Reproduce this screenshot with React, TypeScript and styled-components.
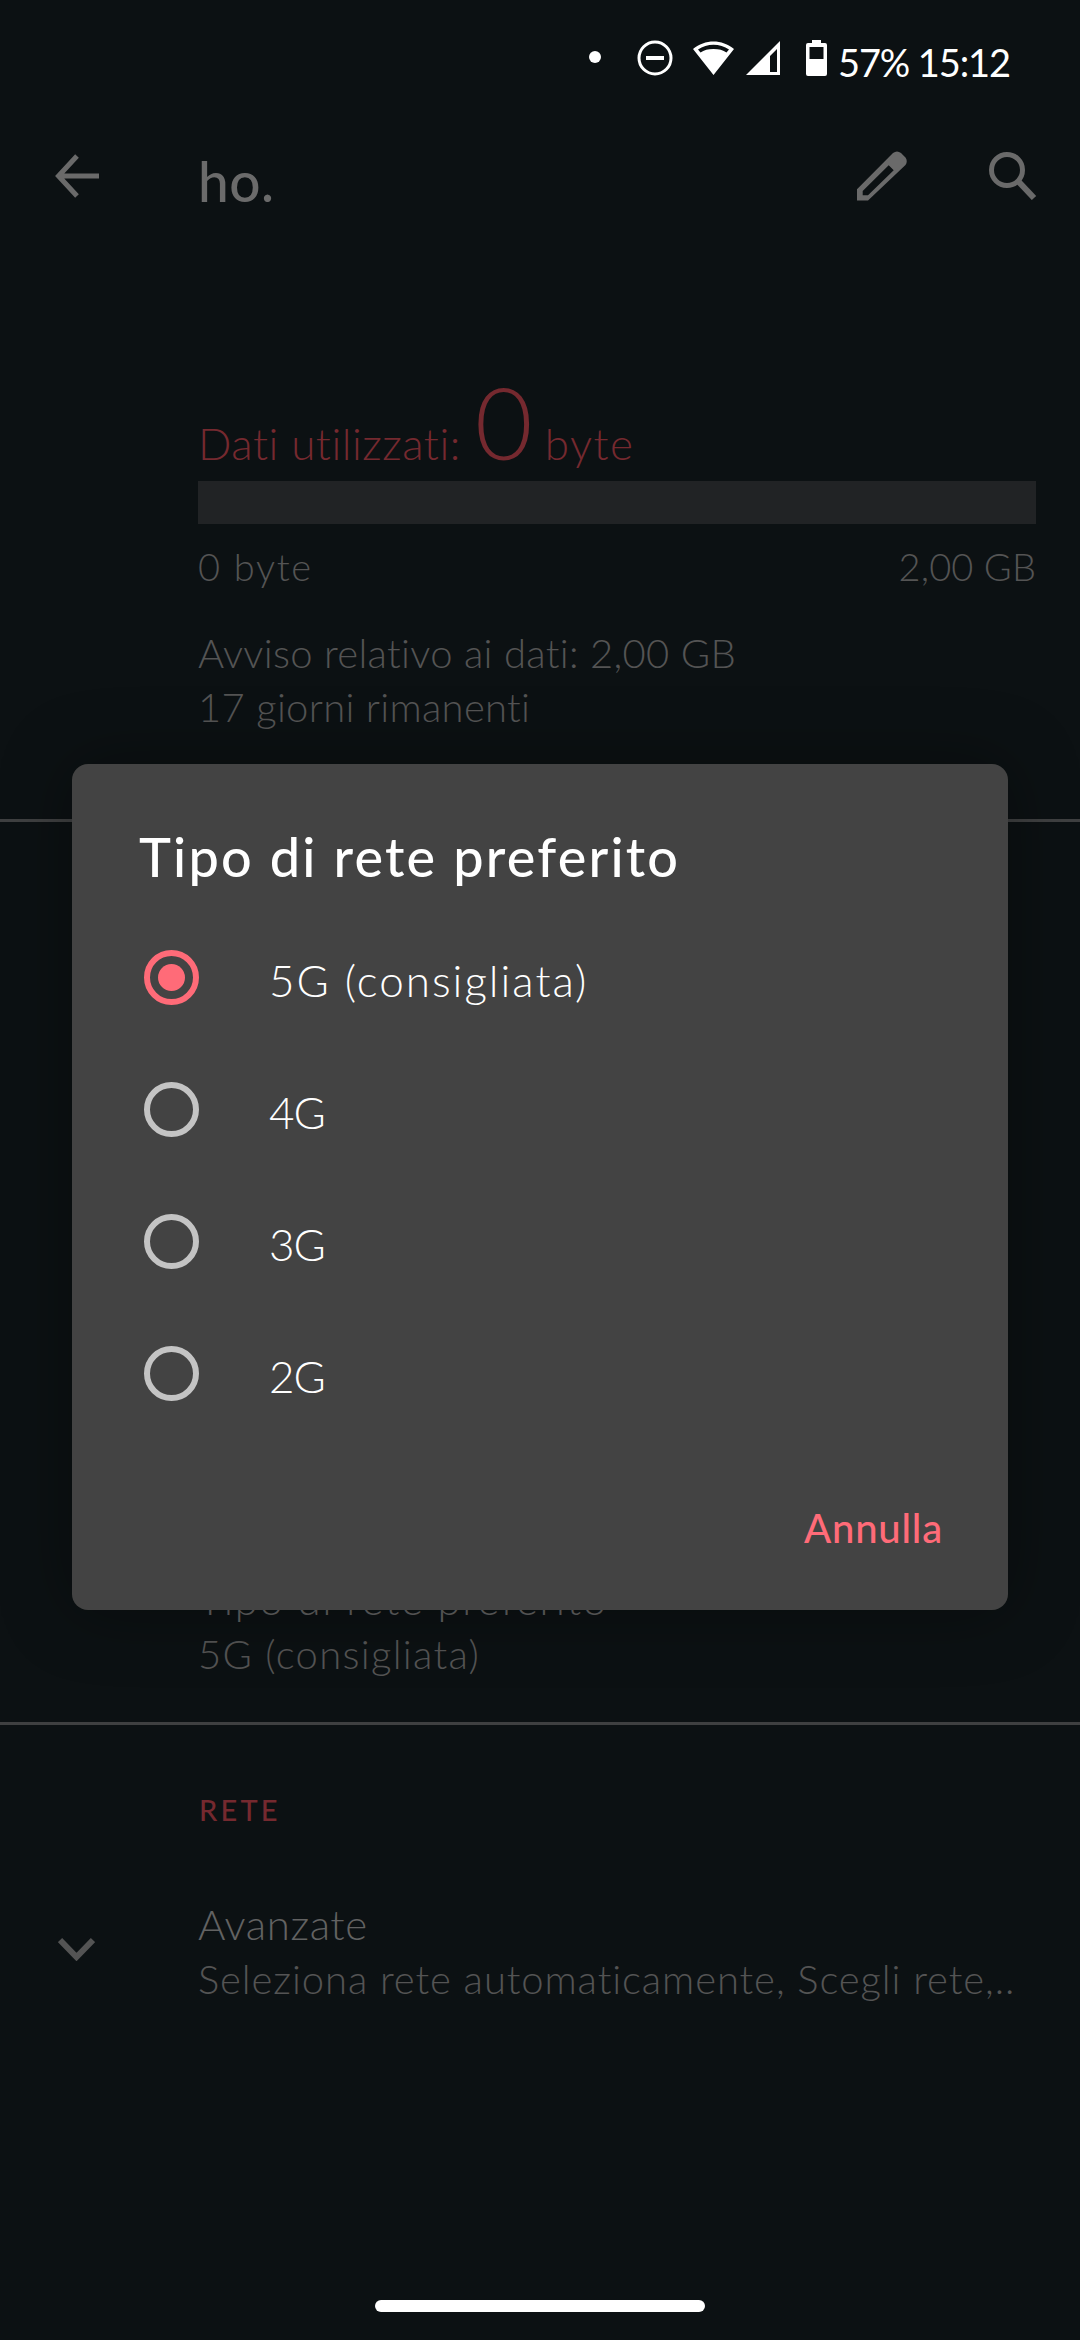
import React from 'react'
import styled, { createGlobalStyle } from 'styled-components'

const GlobalStyle = createGlobalStyle`
    html, body {
        margin: 0;
        padding: 0;
        background: #0c1113;
    }
    * {
        box-sizing: border-box;
    }
`

const font = `Lato, "Noto Sans", sans-serif`

const Screen = styled.div`
    position: relative;
    width: 1080px;
    height: 2340px;
    overflow: hidden;
    display: flex;
    flex-direction: column;
    background: #0c1113;
    font-family: ${font};
`

const StatusBar = styled.div`
    height: 112px;
    display: flex;
    align-items: flex-start;
    justify-content: flex-end;
    padding: 40px 70px 0 0;
    color: #fff;
`

const StatusDot = styled.div`
    width: 12px;
    height: 12px;
    margin: 11px 36px 0 0;
    border-radius: 50%;
    background: #fff;
`

const StatusIcon = styled.svg<{ $gap: number }>`
    display: block;
    margin-right: ${p => p.$gap}px;
`

const StatusText = styled.div`
    font-size: 38px;
    line-height: 38px;
    margin-top: 3px;
    font-weight: 400;
    letter-spacing: -1.1px;
    white-space: nowrap;
`

const Toolbar = styled.div`
    height: 128px;
    display: flex;
    align-items: center;
    padding: 0 43px 0 55px;
    color: #6a6a6a;
`

const ToolbarTitle = styled.div`
    flex: 1;
    margin: 10px 0 0 99px;
    font-size: 55px;
    font-weight: 500;
    line-height: 90px;
    letter-spacing: 0.5px;
    color: #6b6b6b;
`

const ToolbarIcon = styled.svg<{ $gap?: number }>`
    display: block;
    margin-left: ${p => p.$gap ?? 0}px;
`

const Usage = styled.section`
    padding: 137px 44px 0 198px;
    height: 579px;
`

const UsageHead = styled.div`
    display: flex;
    align-items: baseline;
    height: 104px;
    color: #75292f;
    font-size: 44px;
    font-weight: 300;
    line-height: 88px;
    letter-spacing: 0.5px;
`

const UsageBig = styled.span`
    font-size: 100px;
    letter-spacing: 0;
    margin: 0 12px 0 14px;
`

const UsageUnit = styled.span`
    letter-spacing: 1.5px;
`

const Bar = styled.div`
    height: 43px;
    background: #212325;
`

const BarLabels = styled.div`
    display: flex;
    justify-content: space-between;
    margin-top: 19px;
    font-size: 38px;
    line-height: 46px;
    font-weight: 300;
    color: #545454;
`

const BarLabel = styled.span<{ $spacing: number }>`
    letter-spacing: ${p => p.$spacing}px;
`

const UsageNote = styled.div`
    margin-top: 37px;
    font-size: 40px;
    line-height: 54px;
    font-weight: 300;
    letter-spacing: 0.3px;
    color: #545454;
`

const Divider = styled.div`
    height: 3px;
    background: #3f4041;
`

const Spacer = styled.div<{ $height: number }>`
    height: ${p => p.$height}px;
`

const Pref = styled.div`
    padding-left: 198px;
    font-weight: 300;
`

const PrefTitle = styled.div<{ $spacing: number }>`
    font-size: 42px;
    line-height: 55px;
    letter-spacing: ${p => p.$spacing}px;
    color: #626262;
`

const PrefValue = styled.div<{ $spacing: number }>`
    font-size: 40px;
    line-height: 54px;
    letter-spacing: ${p => p.$spacing}px;
    color: #545454;
`

const SectionLabel = styled.div`
    padding: 68px 0 0 199px;
    font-size: 29px;
    line-height: 34px;
    font-weight: 500;
    letter-spacing: 3.2px;
    color: #75292f;
`

const Advanced = styled.div`
    display: flex;
    align-items: center;
    margin-top: 70px;
    padding-left: 58px;
`

const Chevron = styled.svg`
    display: block;
    margin-bottom: 6px;
`

const AdvancedText = styled.div`
    margin-left: 103px;
    font-weight: 300;
    white-space: nowrap;
`

const HomeBar = styled.div`
    position: absolute;
    left: 375px;
    top: 2300px;
    width: 330px;
    height: 12px;
    border-radius: 6px;
    background: #fff;
`

const Scrim = styled.div`
    position: absolute;
    inset: 0;
    padding: 764px 72px 0;
`

const Dialog = styled.div`
    height: 846px;
    display: flex;
    flex-direction: column;
    border-radius: 16px;
    background: #434343;
    box-shadow: 0 0 70px rgba(0, 0, 0, 0.35);
    color: #fff;
`

const DialogTitle = styled.div`
    padding: 57px 0 0 67px;
    font-size: 54px;
    line-height: 72px;
    font-weight: 500;
    letter-spacing: 2.2px;
`

const Options = styled.div`
    display: flex;
    flex-direction: column;
    margin-top: 18px;
`

const Option = styled.label`
    height: 132px;
    display: flex;
    align-items: center;
    padding-left: 72px;
`

const Radio = styled.span<{ $checked?: boolean }>`
    width: 55px;
    height: 55px;
    display: flex;
    align-items: center;
    justify-content: center;
    border-radius: 50%;
    border: 6px solid ${p => (p.$checked ? '#ff6b78' : '#c4c4c4')};

    &::after {
        content: '';
        width: 27px;
        height: 27px;
        border-radius: 50%;
        background: ${p => (p.$checked ? '#ff6b78' : 'transparent')};
    }
`

const OptionLabel = styled.span<{ $spacing: number }>`
    margin-left: 70px;
    font-size: 44px;
    font-weight: 300;
    line-height: 60px;
    letter-spacing: ${p => p.$spacing}px;
    position: relative;
    top: 3px;
`

const DialogActions = styled.div`
    display: flex;
    justify-content: flex-end;
    padding: 59px 65px 0 0;
`

const CancelButton = styled.div`
    font-size: 40px;
    line-height: 60px;
    font-weight: 500;
    letter-spacing: 0.8px;
    color: #ff6b78;
`

const options = ['5G (consigliata)', '4G', '3G', '2G']

const App = () => {
    return (
        <Screen>
            <GlobalStyle />
            <StatusBar>
                <StatusDot />
                <StatusIcon $gap={20} width="36" height="36" viewBox="0 0 36 36">
                    <circle cx="18" cy="18" r="16" fill="none" stroke="#fff" strokeWidth="3" />
                    <rect x="9" y="16" width="18" height="4" fill="#fff" />
                </StatusIcon>
                <StatusIcon $gap={12} width="41" height="36" viewBox="0 0 41 36">
                    <path d="M20.5 35 L0 9 C12 -1 29 -1 41 9 Z M20.5 9 C15 9 11 10 7.5 12.5 L5 9.5 C14 3 27 3 36 9.5 L33.5 12.5 C30 10 26 9 20.5 9 Z" fill="#fff" fillRule="evenodd" />
                </StatusIcon>
                <StatusIcon $gap={26} width="34" height="36" viewBox="0 0 34 36">
                    <path d="M0 35 L34 1 V35 Z M24 32 H31 V9 L24 16 Z" fill="#fff" fillRule="evenodd" />
                </StatusIcon>
                <StatusIcon $gap={11} width="21" height="36" viewBox="0 0 21 36">
                    <path d="M6 0 H15 V3 H19 Q21 3 21 5 V34 Q21 36 19 36 H2 Q0 36 0 34 V5 Q0 3 2 3 H6 Z M3.5 7 V19 H17.5 V7 Z" fill="#fff" fillRule="evenodd" />
                </StatusIcon>
                <StatusText>57% 15:12</StatusText>
            </StatusBar>
            <Toolbar>
                <ToolbarIcon width="44" height="44" viewBox="0 0 44 44">
                    <path d="M22 2 L3.5 22 L22 42 M3.5 22 H44" fill="none" stroke="#6a6a6a" strokeWidth="5" />
                </ToolbarIcon>
                <ToolbarTitle>ho.</ToolbarTitle>
                <ToolbarIcon width="50" height="50" viewBox="0 0 50 50">
                    <path d="M0 38.3 L36 2 Q40 -1 44 2 L48.5 6.5 Q51 10 48.5 14 L11 49.5 H0 Z M5.7 40 V44.3 H11 L36.7 19.3 L31.7 14.3 Z" fill="#6a6a6a" fillRule="evenodd" />
                </ToolbarIcon>
                <ToolbarIcon $gap={82} width="48" height="48" viewBox="0 0 48 48">
                    <circle cx="18" cy="18" r="15.5" fill="none" stroke="#6a6a6a" strokeWidth="5" />
                    <path d="M29 29 L45 46" fill="none" stroke="#6a6a6a" strokeWidth="6" />
                </ToolbarIcon>
            </Toolbar>
            <Usage>
                <UsageHead>
                    Dati utilizzati:<UsageBig>0</UsageBig>
                    <UsageUnit>byte</UsageUnit>
                </UsageHead>
                <Bar />
                <BarLabels>
                    <BarLabel $spacing={1.7}>0 byte</BarLabel>
                    <BarLabel $spacing={0.1}>2,00 GB</BarLabel>
                </BarLabels>
                <UsageNote>
                    Avviso relativo ai dati: 2,00 GB
                    <br />
                    17 giorni rimanenti
                </UsageNote>
            </Usage>
            <Divider />
            <Spacer $height={750} />
            <Pref>
                <PrefTitle $spacing={1.6}>Tipo di rete preferito</PrefTitle>
                <PrefValue $spacing={1.3}>5G (consigliata)</PrefValue>
            </Pref>
            <Spacer $height={41} />
            <Divider />
            <SectionLabel>RETE</SectionLabel>
            <Advanced>
                <Chevron width="37" height="24" viewBox="0 0 37 24">
                    <path d="M2 3 L18.5 20 L35 3" fill="none" stroke="#545454" strokeWidth="6" />
                </Chevron>
                <AdvancedText>
                    <PrefTitle $spacing={0.6}>Avanzate</PrefTitle>
                    <PrefValue $spacing={0.9}>Seleziona rete automaticamente, Scegli rete,..</PrefValue>
                </AdvancedText>
            </Advanced>
            <HomeBar />
            <Scrim>
                <Dialog>
                    <DialogTitle>Tipo di rete preferito</DialogTitle>
                    <Options>
                        {options.map((o, i) => (
                            <Option key={o}>
                                <Radio $checked={i === 0} />
                                <OptionLabel $spacing={i === 0 ? 2 : -1}>{o}</OptionLabel>
                            </Option>
                        ))}
                    </Options>
                    <DialogActions>
                        <CancelButton>Annulla</CancelButton>
                    </DialogActions>
                </Dialog>
            </Scrim>
        </Screen>
    )
}

export default App
